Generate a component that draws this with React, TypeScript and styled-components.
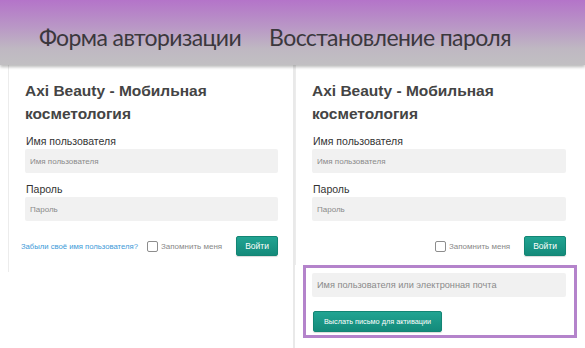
import { createGlobalStyle, styled } from "styled-components";

const GlobalStyle = createGlobalStyle`
  body {
    margin: 0;
    background: #fff;
    font-family: "Liberation Sans", Arial, sans-serif;
  }
`;

const Page = styled.div`
  width: 585px;
  height: 348px;
  overflow: hidden;
  background: #fff;
  display: flex;
  flex-direction: column;
`;

const Header = styled.header`
  position: relative;
  z-index: 1;
  height: 65px;
  flex-shrink: 0;
  display: grid;
  grid-template-columns: 250px 250px;
  align-items: center;
  padding: 8px 0 0 15px;
  box-sizing: border-box;
  background: linear-gradient(180deg, #b474c9 0%, #b996c6 40%, #bfb8c2 75%, #c1bfc2 100%);
  box-shadow: 0 2px 3px rgba(0, 0, 0, 0.28);
`;

const HeaderTitle = styled.h2`
  margin: 0;
  text-align: center;
  font-family: Lato, sans-serif;
  font-weight: normal;
  font-size: 23px;
  letter-spacing: -0.6px;
  color: #3b383d;
  white-space: nowrap;
`;

const Columns = styled.div`
  flex: 1;
  display: grid;
  grid-template-columns: 287px 1fr;
  padding-left: 8px;
`;

const Column = styled.section<{ $divider?: boolean }>`
  border-right: ${(p) => (p.$divider ? "2px solid #e9e9e9" : "none")};
`;

const Card = styled.div<{ $right: number; $height: number }>`
  border-left: 1px solid #ececec;
  height: ${(p) => p.$height}px;
  box-sizing: border-box;
  padding: 14px ${(p) => p.$right}px 0 16px;
`;

const Title = styled.h1`
  margin: 0;
  font-size: 15.5px;
  line-height: 23px;
  font-weight: bold;
  color: #444;
`;

const Label = styled.div`
  font-size: 10.5px;
  line-height: 14px;
  color: #333;
  margin: 9px 0 1px 1px;
`;

const Input = styled.input<{ $size?: number }>`
  display: block;
  width: 100%;
  height: 24px;
  box-sizing: border-box;
  border: none;
  border-radius: 2px;
  background: #f1f1f1;
  padding: 0 5px;
  font-family: "Liberation Sans", Arial, sans-serif;
  font-size: ${(p) => p.$size ?? 8}px;
  color: #555;
  outline: none;
  &::placeholder {
    color: #8a8a8a;
  }
`;

const Actions = styled.div`
  display: flex;
  align-items: center;
  justify-content: flex-end;
  margin-top: 15px;
  white-space: nowrap;
`;

const Link = styled.a`
  font-size: 7.7px;
  color: #3d9ad8;
  text-decoration: none;
  margin-right: 9px;
`;

const Remember = styled.label`
  display: flex;
  align-items: center;
  gap: 3px;
  font-size: 8px;
  color: #888;
  margin-right: 14px;
`;

const Box = styled.span`
  width: 9px;
  height: 9px;
  border: 1px solid #8d8d8d;
  border-radius: 2px;
  background: #fff;
`;

const Button = styled.button`
  height: 20px;
  padding: 0 8px;
  border: 1px solid #138574;
  border-radius: 2px;
  background: linear-gradient(180deg, #21a492 0%, #148a7a 100%);
  color: #fff;
  font-family: "Liberation Sans", Arial, sans-serif;
  font-size: 8.5px;
  white-space: nowrap;
  box-shadow: 0 1px 1px rgba(0, 0, 0, 0.15);
`;

const Recovery = styled.div`
  margin: 0 8px;
  border: 3px solid #b483cb;
  padding: 5px 8px 3px 6px;
  display: flex;
  flex-direction: column;
  align-items: flex-start;
  gap: 14px;
`;

const RecoveryButton = styled(Button)`
  margin-left: 1px;
  height: 21px;
  padding: 0 10px;
  font-size: 7.3px;
`;

function LoginForm({ forgot }: { forgot?: boolean }) {
  return (
    <>
      <Title>
        Axi Beauty - Мобильная
        <br />
        косметология
      </Title>
      <Label>Имя пользователя</Label>
      <Input placeholder="Имя пользователя" />
      <Label>Пароль</Label>
      <Input placeholder="Пароль" />
      <Actions>
        {forgot && <Link href="#">Забыли своё имя пользователя?</Link>}
        <Remember>
          <Box />
          Запомнить меня
        </Remember>
        <Button>Войти</Button>
      </Actions>
    </>
  );
}

export default function App() {
  return (
    <Page>
      <GlobalStyle />
      <Header>
        <HeaderTitle>Форма авторизации</HeaderTitle>
        <HeaderTitle>Восстановление пароля</HeaderTitle>
      </Header>
      <Columns>
        <Column $divider>
          <Card $right={15} $height={207}>
            <LoginForm forgot />
          </Card>
        </Column>
        <Column>
          <Card $right={19} $height={200}>
            <LoginForm />
          </Card>
          <Recovery>
            <Input $size={9.2} placeholder="Имя пользователя или электронная почта" />
            <RecoveryButton>Выслать письмо для активации</RecoveryButton>
          </Recovery>
        </Column>
      </Columns>
    </Page>
  );
}
